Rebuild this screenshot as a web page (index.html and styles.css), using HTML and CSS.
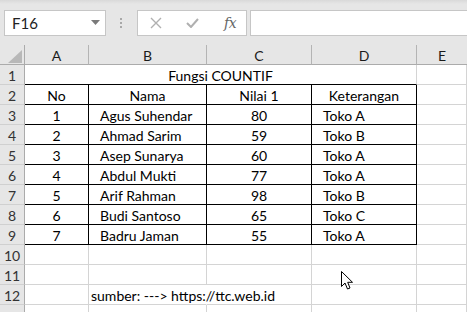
FILE: index.html
```html
<!DOCTYPE html>
<html>
<head>
<meta charset="utf-8">
<link rel="stylesheet" href="styles.css">
</head>
<body>
<div class="app">
  <div class="toolbar">
    <div class="namebox">
      <span class="nb-text">F16</span>
      <svg class="nb-arrow" width="9" height="5" viewBox="0 0 9 5"><polygon points="0,0 9,0 4.5,5" fill="#7a7a7a"/></svg>
    </div>
    <div class="dots">
      <svg width="3" height="11" viewBox="0 0 3 11"><rect x="0" y="0" width="2" height="2" fill="#a8a8a8"/><rect x="0" y="4" width="2" height="2" fill="#a8a8a8"/><rect x="0" y="8" width="2" height="2" fill="#a8a8a8"/></svg>
    </div>
    <div class="fxbtns">
      <svg class="btn-x" width="12" height="12" viewBox="0 0 12 12"><path d="M1 1 L11 11 M11 1 L1 11" stroke="#b0b0b0" stroke-width="1.4" fill="none"/></svg>
      <svg class="btn-check" width="13" height="10" viewBox="0 0 13 10"><path d="M1 5 L5 9 L12 1" stroke="#b0b0b0" stroke-width="2" fill="none"/></svg>
      <span class="btn-fx">fx</span>
    </div>
    <div class="formula"></div>
  </div>
  <div class="sheet">
    <div class="corner"><svg width="14" height="13" viewBox="0 0 14 13"><polygon points="0,13 14,13 14,0" fill="#b8b8b8"/></svg></div>
    <div class="ch">A</div><div class="ch">B</div><div class="ch">C</div><div class="ch">D</div><div class="ch last">E</div>

    <div class="rh">1</div>
    <div class="c merged">Fungsi COUNTIF</div><div class="c"></div>

    <div class="rh">2</div>
    <div class="c t ctr">No</div><div class="c t ctr">Nama</div><div class="c t ctr">Nilai 1</div><div class="c t ctr">Keterangan</div><div class="c"></div>

    <div class="rh">3</div>
    <div class="c t ctr">1</div><div class="c t ind">Agus Suhendar</div><div class="c t ctr">80</div><div class="c t ind">Toko A</div><div class="c"></div>

    <div class="rh">4</div>
    <div class="c t ctr">2</div><div class="c t ind">Ahmad Sarim</div><div class="c t ctr">59</div><div class="c t ind">Toko B</div><div class="c"></div>

    <div class="rh">5</div>
    <div class="c t ctr">3</div><div class="c t ind">Asep Sunarya</div><div class="c t ctr">60</div><div class="c t ind">Toko A</div><div class="c"></div>

    <div class="rh">6</div>
    <div class="c t ctr">4</div><div class="c t ind">Abdul Mukti</div><div class="c t ctr">77</div><div class="c t ind">Toko A</div><div class="c"></div>

    <div class="rh">7</div>
    <div class="c t ctr">5</div><div class="c t ind">Arif Rahman</div><div class="c t ctr">98</div><div class="c t ind">Toko B</div><div class="c"></div>

    <div class="rh">8</div>
    <div class="c t ctr">6</div><div class="c t ind">Budi Santoso</div><div class="c t ctr">65</div><div class="c t ind">Toko C</div><div class="c"></div>

    <div class="rh">9</div>
    <div class="c t ctr">7</div><div class="c t ind">Badru Jaman</div><div class="c t ctr">55</div><div class="c t ind">Toko A</div><div class="c"></div>

    <div class="rh">10</div>
    <div class="c"></div><div class="c"></div><div class="c"></div><div class="c"></div><div class="c"></div>

    <div class="rh">11</div>
    <div class="c"></div><div class="c"></div><div class="c"></div><div class="c"></div><div class="c"></div>

    <div class="rh">12</div>
    <div class="c"></div><div class="c src">sumber: ---&gt; https://ttc.web.id</div><div class="c"></div><div class="c"></div><div class="c"></div>

    <div class="rh"></div>
    <div class="c"></div><div class="c"></div><div class="c"></div><div class="c"></div><div class="c"></div>
  </div>
  <svg class="cursor" width="13" height="20" viewBox="0 0 13 20"><path d="M0.5 0.5 L0.5 15.5 L4 12 L6.5 18 L9 17 L6.7 11.3 L11.5 11.3 Z" fill="#ffffff" stroke="#000000" stroke-width="1"/></svg>
</div>
</body>
</html>
```

FILE: styles.css
```css
html, body {
  margin: 0;
  padding: 0;
}
body {
  width: 467px;
  height: 312px;
  overflow: hidden;
  background: #e6e6e6;
  font-family: "Lato", "Liberation Sans", sans-serif;
}
.app {
  position: relative;
  width: 467px;
  height: 312px;
  overflow: hidden;
}
.toolbar {
  display: flex;
  align-items: center;
  height: 45px;
  box-sizing: border-box;
  padding: 10px 0 10px 4px;
  background: linear-gradient(#d9d9d9 0px, #e6e6e6 4px, #e6e6e6 100%);
}
.namebox {
  width: 102px;
  height: 26px;
  box-sizing: border-box;
  background: #ffffff;
  border: 1px solid #c6c6c6;
  display: flex;
  align-items: center;
  justify-content: space-between;
  padding: 0 5px 0 7px;
}
.nb-text {
  font-size: 15px;
  color: #222;
}
.nb-arrow {
  display: block;
}
.dots {
  width: 31px;
  display: flex;
  justify-content: center;
  padding-top: 1px;
}
.dots svg { display: block; }
.fxbtns {
  width: 110px;
  height: 26px;
  box-sizing: border-box;
  background: #ffffff;
  border: 1px solid #c6c6c6;
  display: flex;
  align-items: center;
  padding-left: 12px;
}
.btn-x { display: block; }
.btn-check { display: block; margin-left: 24px; }
.btn-fx {
  margin-left: 25px;
  font-family: "DejaVu Serif", "Liberation Serif", serif;
  font-style: italic;
  font-size: 14px;
  color: #666;
  letter-spacing: -0.5px;
}
.formula {
  flex: 1;
  height: 26px;
  box-sizing: border-box;
  margin-left: 3px;
  background: #ffffff;
  border: 1px solid #c6c6c6;
  border-right: none;
}
.sheet {
  display: grid;
  grid-template-columns: 25px 64px 118px 105px 105px 1fr;
  grid-auto-rows: 20px;
  background: #ffffff;
  font-size: 14px;
  color: #000;
}
.corner {
  background: #e6e6e6;
  border-right: 1px solid #ababab;
  border-bottom: 1px solid #ababab;
  box-sizing: border-box;
  display: flex;
  align-items: flex-end;
  justify-content: flex-end;
  padding: 0 2px 1px 0;
}
.corner svg { display: block; }
.ch {
  background: #e6e6e6;
  border-right: 1px solid #b4b4b4;
  border-bottom: 1px solid #ababab;
  box-sizing: border-box;
  display: flex;
  align-items: center;
  justify-content: center;
  font-size: 14px;
  color: #1a1a1a;
  padding-top: 1px;
}
.ch.last { border-right: none; }
.rh {
  background: #e6e6e6;
  border-right: 1px solid #ababab;
  border-bottom: 1px solid #d0d0d0;
  box-sizing: border-box;
  display: flex;
  align-items: center;
  justify-content: center;
  font-size: 14px;
  color: #333;
  padding-top: 1px;
}
.c {
  border-right: 1px solid #d4d4d4;
  border-bottom: 1px solid #d4d4d4;
  box-sizing: border-box;
  line-height: 21px;
  white-space: nowrap;
}
.merged {
  grid-column: span 4;
  text-align: center;
  border-bottom-color: #000;
}
.t {
  border-right-color: #000;
  border-bottom-color: #000;
}
.ctr { text-align: center; }
.ind { padding-left: 11px; }
.src {
  padding-left: 2px;
  overflow: visible;
  border-right-color: #ffffff;
  position: relative;
  z-index: 1;
}
.cursor {
  position: absolute;
  left: 341px;
  top: 271px;
}
```
